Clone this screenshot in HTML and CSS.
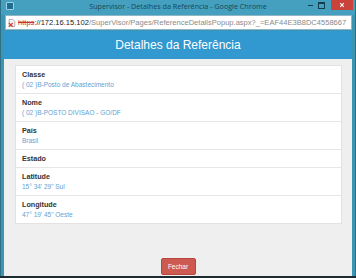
FILE: index.html
```html
<!DOCTYPE html>
<html lang="pt">
<head>
  <meta charset="UTF-8" />
  <title>Supervisor - Detalhes da Referência</title>
  <link rel="stylesheet" href="styles.css">
</head>
<body>

<div class="window">
  <!-- barra de titulo -->
  <div class="titlebar">
    <div class="app-icon"></div>
    <div class="title">Supervisor - Detalhes da Referência - Google Chrome</div>
    <div class="controls">
      <span class="ctl-min"></span>
      <span class="ctl-max"></span>
      <span class="ctl-close">
        <svg viewBox="0 0 10 10" width="6" height="6"><path d="M2 2 L8 8 M8 2 L2 8" stroke="#fff" stroke-width="1.8"/></svg>
      </span>
    </div>
  </div>

  <!-- endereco -->
  <div class="addressbar">
    <svg class="page-icon" viewBox="0 0 10 10" width="8" height="8">
      <path d="M1.5 0.5 H6 L8.5 3 V9.5 H1.5 Z" fill="#f4f4f4" stroke="#888" stroke-width="0.8"/>
      <path d="M1 5 L6 9.5 M6 5 L1 9.5" stroke="#d33" stroke-width="1.3"/>
    </svg>
    <span class="url"><span class="https">https</span><span class="host">://172.16.15.102</span>/SuperVisor/Pages/ReferenceDetailsPopup.aspx?_=EAF44E3B8DC4558667</span>
  </div>

  <div class="page">
    <div class="header">Detalhes da Referência</div>

    <ul class="details">
      <li>
        <div class="label">Classe</div>
        <div class="value">( 02 )B-Posto de Abastecimento</div>
      </li>
      <li>
        <div class="label">Nome</div>
        <div class="value">( 02 )B-POSTO DIVISAO - GO/DF</div>
      </li>
      <li>
        <div class="label">País</div>
        <div class="value">Brasil</div>
      </li>
      <li>
        <div class="label">Estado</div>
      </li>
      <li>
        <div class="label">Latitude</div>
        <div class="value">15° 34' 29" Sul</div>
      </li>
      <li>
        <div class="label">Longitude</div>
        <div class="value">47° 19' 45" Oeste</div>
      </li>
    </ul>

    <div class="footer">
      <button class="btn-close">Fechar</button>
    </div>
  </div>
</div>

</body>
</html>
```

FILE: styles.css
```css
html, body {
  margin: 0;
  padding: 0;
}

body {
  width: 356px;
  height: 278px;
  overflow: hidden;
  font-family: "Liberation Sans", Arial, sans-serif;
  background: #1d2a30;
}

.window {
  height: 276px;
  display: flex;
  flex-direction: column;
  background: #3b95b3;
  border-left: 1px solid #2c6f86;
  border-right: 1px solid #2c6f86;
  padding: 0 3px;
}

/* barra de titulo */
.titlebar {
  height: 15px;
  display: grid;
  grid-template-columns: 1fr auto 1fr;
  align-items: center;
  background: #44a0be;
  margin: 0 -3px;
  padding: 0 3px;
}

.app-icon {
  width: 6px;
  height: 6px;
  margin-left: 2px;
  margin-top: -3px;
  background: #1f6e92;
  border: 1px solid #9fd3e6;
  border-radius: 1px;
}

.title {
  font-family: "Open Sans", "Liberation Sans", sans-serif;
  font-size: 7.2px;
  color: #17485a;
  margin-top: -3px;
}

.controls {
  justify-self: end;
  display: flex;
  align-items: flex-start;
  align-self: start;
  margin-right: -1px;
}

.ctl-min {
  width: 5px;
  height: 1px;
  background: #163d4b;
  margin: 5px 5px 0 0;
}

.ctl-max {
  width: 5px;
  height: 4px;
  border: 1px solid #163d4b;
  border-top-width: 2px;
  margin: 2px 6px 0 0;
}

.ctl-close {
  width: 22px;
  height: 10px;
  background: #c9433b;
  display: flex;
  align-items: center;
  justify-content: center;
}

/* endereco */
.addressbar {
  height: 13px;
  background: #fff;
  border: 1px solid #8fb7c7;
  margin-left: 1px;
  display: flex;
  align-items: center;
  gap: 2px;
  padding: 0 1px 0 2px;
  white-space: nowrap;
  overflow: hidden;
}

.page-icon {
  flex: none;
}

.url {
  font-size: 7.55px;
  color: #8a8a8a;
}

.https {
  color: #c33;
  text-decoration: line-through;
}

.host {
  color: #222;
}

/* conteudo */
.page {
  flex: 1;
  margin-top: 1px;
  background: #efefef;
  display: flex;
  flex-direction: column;
}

.header {
  height: 28px;
  background: #3198d0;
  color: #fff;
  font-size: 12px;
  display: flex;
  align-items: center;
  justify-content: center;
}

.details {
  list-style: none;
  margin: 6px 10px 0 11px;
  padding: 0;
  background: #fff;
  border: 1px solid #e2e2e2;
}

.details li {
  padding: 4px 6px 3px;
  border-bottom: 1px solid #e6e6e6;
}

.details li:last-child {
  border-bottom: none;
}

.label {
  font-size: 7.2px;
  font-weight: bold;
  color: #333;
  line-height: 10px;
}

.value {
  font-size: 6.5px;
  color: #64a2d2;
  line-height: 10px;
}

.footer {
  flex: 1;
  display: flex;
  justify-content: center;
  align-items: flex-end;
  padding-bottom: 1px;
}

.btn-close {
  width: 35px;
  height: 17px;
  border: 1px solid #b8463e;
  border-radius: 2px;
  background: #cc5a50;
  color: #fff;
  font-family: "Liberation Sans", Arial, sans-serif;
  font-size: 6.5px;
  padding: 0;
}
```
